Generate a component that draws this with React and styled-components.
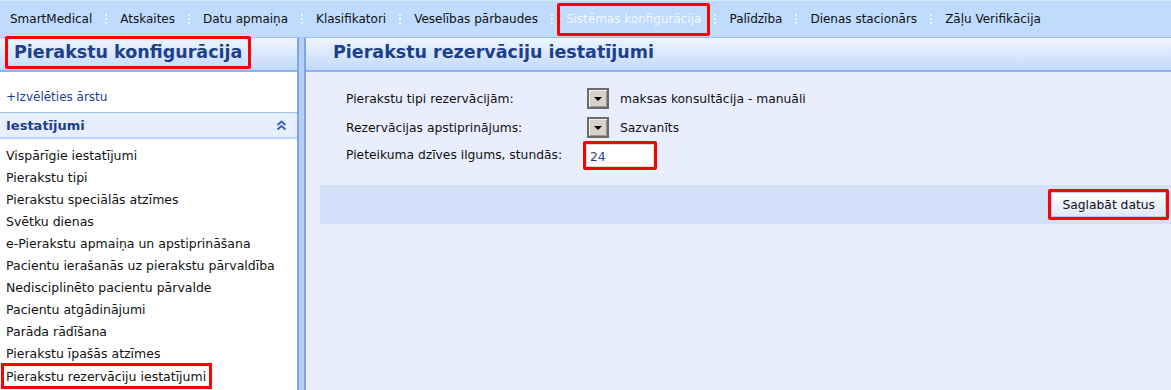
import styled, { createGlobalStyle } from "styled-components";

const GlobalStyle = createGlobalStyle`
  html, body {
    margin: 0;
    padding: 0;
    height: 390px;
    overflow: hidden;
    background: #ffffff;
  }
  body {
    font-family: "DejaVu Sans", Verdana, sans-serif;
    font-size: 12px;
  }
`;

const Page = styled.div`
  display: flex;
  flex-direction: column;
  width: 1171px;
  height: 390px;
`;

const MenuBar = styled.div`
  display: flex;
  align-items: center;
  height: 38px;
  padding-left: 1px;
  background: #bfdbfe;
  border-top: 1px solid #d6e7fd;
  border-bottom: 1px solid #9dbfef;
  box-sizing: border-box;
`;

const MenuItem = styled.div`
  display: flex;
  align-items: center;
  height: 33px;
  padding: 0 6px 1px;
  box-sizing: border-box;
  color: ${(p) => (p.$active ? "#f4f8ff" : "#111111")};
  border: 3px solid ${(p) => (p.$active ? "#ff0000" : "transparent")};
  white-space: nowrap;
  border-radius: 2px;
`;

const MenuSep = styled.span`
  width: 2px;
  height: 12px;
  margin: 0 4px;
  background: radial-gradient(circle, #f2f8ff 0 0.9px, transparent 1.1px) 0 0 / 2px 4px repeat-y;
  opacity: 0.9;
`;

const Main = styled.div`
  display: flex;
  flex: 1;
  min-height: 0;
`;

const LeftPanel = styled.div`
  width: 297px;
  display: flex;
  flex-direction: column;
  background: #ffffff;
`;

const Splitter = styled.div`
  width: 9px;
  box-sizing: border-box;
  background: #b4d0f7;
  border-left: 2px solid #7fa6e2;
  border-right: 2px solid #7fa6e2;
`;

const RightPanel = styled.div`
  flex: 1;
  display: flex;
  flex-direction: column;
  background: #e8eefd;
`;

const PanelHeader = styled.div`
  height: 34px;
  box-sizing: border-box;
  display: flex;
  align-items: center;
  padding-left: ${(p) => p.$pad}px;
  background: linear-gradient(to bottom, #eef5fe, #c3dafb);
  border-bottom: 2px solid #8fb4e9;
`;

const HeaderTitle = styled.div`
  font-weight: bold;
  font-size: 17.5px;
  color: #1e3f8c;
  padding: 3px 6px 4px;
  border: 3px solid ${(p) => (p.$marked ? "#ff0000" : "transparent")};
  border-radius: 2px;
  margin-top: -3px;
  white-space: nowrap;
`;

const PickDoctor = styled.div`
  color: #1d3ca0;
  padding: 18px 0 0 6px;
  height: 40px;
  box-sizing: border-box;
`;

const SectionHeader = styled.div`
  display: flex;
  align-items: center;
  justify-content: space-between;
  height: 27px;
  box-sizing: border-box;
  padding: 0 10px 0 6px;
  background: #e7eefd;
  border-top: 1px solid #9dbfec;
  border-bottom: 2px solid #b9d5fb;
  font-weight: bold;
  font-size: 13px;
  color: #1e3f8c;
`;

const NavList = styled.div`
  display: flex;
  flex-direction: column;
  padding-top: 5px;
  font-size: 12.5px;
`;

const NavItem = styled.div`
  height: 22px;
  display: flex;
  align-items: center;
  align-self: flex-start;
  padding: 0 6px;
  box-sizing: border-box;
  color: #111111;
  white-space: nowrap;
  ${(p) =>
    p.$marked &&
    "height: 26px; padding: 0 3px 0 2px; margin: -1px 0 0 1px; border: 3px solid #ff0000;"}
`;

const Form = styled.div`
  display: flex;
  flex-direction: column;
  padding: 16px 0 0 40px;
  color: #111111;
  font-size: 12.3px;
`;

const Row = styled.div`
  display: flex;
  align-items: center;
  margin-top: ${(p) => p.$gap}px;
`;

const Label = styled.div`
  width: 241px;
  margin-top: ${(p) => p.$drop || 0}px;
`;

const Value = styled.div`
  display: flex;
  align-items: center;
  gap: 11px;
  margin-left: ${(p) => (p.$input ? -4 : 0)}px;
`;

const DropButton = styled.div`
  width: 22px;
  height: 21px;
  box-sizing: border-box;
  border: 2px solid #6a6a6a;
  box-shadow: inset 1px 1px 0 #f4f2ee, inset -1px -1px 0 #9a968e;
  background: #d6d2ca;
  display: flex;
  align-items: center;
  justify-content: center;
`;

const Triangle = styled.span`
  width: 0;
  height: 0;
  border-left: 4px solid transparent;
  border-right: 4px solid transparent;
  border-top: 4px solid #000000;
`;

const InputFrame = styled.div`
  border: 3px solid #ff0000;
  border-radius: 2px;
`;

const Input = styled.div`
  width: 68px;
  height: 23px;
  background: #ffffff;
  border: 1px solid #d8d8d8;
  color: #2a3f9c;
  padding: 2px 3px 0;
  display: flex;
  align-items: center;
  box-sizing: border-box;
`;

const SaveBar = styled.div`
  margin: 15px 0 0 14px;
  height: 39px;
  background: #d3e0fa;
  display: flex;
  align-items: center;
  justify-content: flex-end;
  padding-right: 2px;
`;

const SaveFrame = styled.div`
  border: 3px solid #ff0000;
  border-radius: 2px;
`;

const SaveButton = styled.div`
  height: 23px;
  padding: 0 10px;
  display: flex;
  align-items: center;
  background: linear-gradient(to bottom, #fbfdff, #dce9fb);
  border: 1px solid #b7c9e6;
  color: #111111;
  font-size: 12.3px;
`;

const menu = [
  "SmartMedical",
  "Atskaites",
  "Datu apmaiņa",
  "Klasifikatori",
  "Veselības pārbaudes",
  "Sistēmas konfigurācija",
  "Palīdzība",
  "Dienas stacionārs",
  "Zāļu Verifikācija",
];

const nav = [
  "Vispārīgie iestatījumi",
  "Pierakstu tipi",
  "Pierakstu speciālās atzīmes",
  "Svētku dienas",
  "e-Pierakstu apmaiņa un apstiprināšana",
  "Pacientu ierašanās uz pierakstu pārvaldība",
  "Nedisciplinēto pacientu pārvalde",
  "Pacientu atgādinājumi",
  "Parāda rādīšana",
  "Pierakstu īpašās atzīmes",
  "Pierakstu rezervāciju iestatījumi",
];

function ChevronsUp() {
  return (
    <svg width="11" height="11" viewBox="0 0 11 11">
      <path d="M1.5 5 L5.5 1.5 L9.5 5" fill="none" stroke="#3c64b4" strokeWidth="2" />
      <path d="M1.5 9.5 L5.5 6 L9.5 9.5" fill="none" stroke="#3c64b4" strokeWidth="2" />
    </svg>
  );
}

export default function App() {
  return (
    <Page>
      <GlobalStyle />
      <MenuBar>
        {menu.map((m, i) => (
          <>
            {i > 0 && <MenuSep key={"s" + i} />}
            <MenuItem key={m} $active={m === "Sistēmas konfigurācija"}>
              {m}
            </MenuItem>
          </>
        ))}
      </MenuBar>
      <Main>
        <LeftPanel>
          <PanelHeader $pad={5}>
            <HeaderTitle $marked>Pierakstu konfigurācija</HeaderTitle>
          </PanelHeader>
          <PickDoctor>+Izvēlēties ārstu</PickDoctor>
          <SectionHeader>
            Iestatījumi
            <ChevronsUp />
          </SectionHeader>
          <NavList>
            {nav.map((n, i) => (
              <NavItem key={n} $marked={i === nav.length - 1}>
                {n}
              </NavItem>
            ))}
          </NavList>
        </LeftPanel>
        <Splitter />
        <RightPanel>
          <PanelHeader $pad={18}>
            <HeaderTitle>Pierakstu rezervāciju iestatījumi</HeaderTitle>
          </PanelHeader>
          <Form>
            <Row $gap={0}>
              <Label>Pierakstu tipi rezervācijām:</Label>
              <Value>
                <DropButton>
                  <Triangle />
                </DropButton>
                maksas konsultācija - manuāli
              </Value>
            </Row>
            <Row $gap={8}>
              <Label>Rezervācijas apstiprinājums:</Label>
              <Value>
                <DropButton>
                  <Triangle />
                </DropButton>
                Sazvanīts
              </Value>
            </Row>
            <Row $gap={3}>
              <Label $drop={-1}>Pieteikuma dzīves ilgums, stundās:</Label>
              <Value $input>
                <InputFrame>
                  <Input>24</Input>
                </InputFrame>
              </Value>
            </Row>
          </Form>
          <SaveBar>
            <SaveFrame>
              <SaveButton>Saglabāt datus</SaveButton>
            </SaveFrame>
          </SaveBar>
        </RightPanel>
      </Main>
    </Page>
  );
}
